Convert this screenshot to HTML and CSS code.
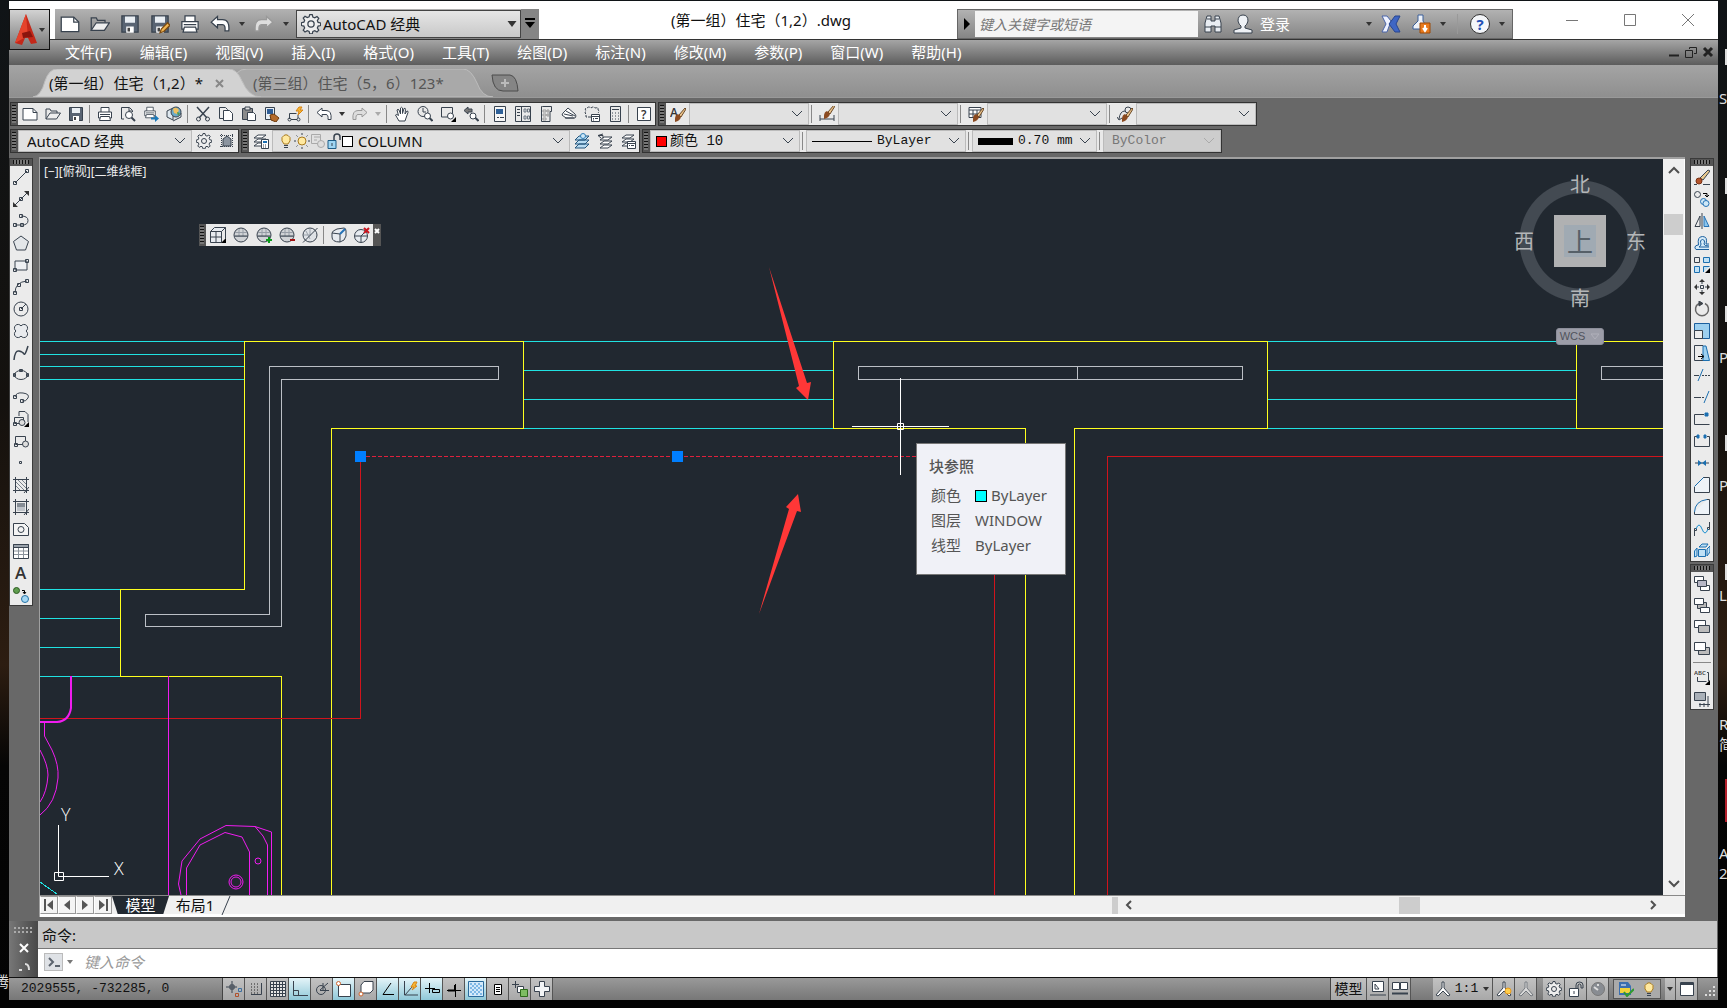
FILE: index.html
```html
<!DOCTYPE html>
<html lang="zh-CN">
<head>
    <meta charset="UTF-8">
    <title>(第一组）住宅（1,2）.dwg</title>
    <link rel="stylesheet" href="styles.css">
</head>
<body>

<!-- 图标库 -->
<svg class="sprite" aria-hidden="true">
    <symbol id="down" viewBox="0 0 8 8"><path d="M1 2h6L4 6z" fill="currentColor" stroke="none"/></symbol>
    <symbol id="chevron" viewBox="0 0 12 12"><path d="M1 3l5 5 5-5"/></symbol>
    <symbol id="new" viewBox="0 0 16 16"><path d="M1 2.500h10l4 4v7.500h-14z" fill="#fff"/><path d="M11 2.500v4h4"/></symbol>
    <symbol id="open" viewBox="0 0 16 16"><path d="M1 13V3h4l1 2h6v2"/><path d="M1 13l4-6h10.500l-4 6z" fill="#eee"/></symbol>
    <symbol id="save" viewBox="0 0 16 16"><path d="M1.500 1.500h13v13h-13z" fill="#596473"/><path d="M4 2h8v5H4z" fill="#e9eef3" stroke="none"/><path d="M5 10h6v5H5z" fill="#fff" stroke="none"/><path d="M6 11h2v3H6z" fill="#444" stroke="none"/></symbol>
    <symbol id="saveas" viewBox="0 0 16 16"><use href="#save"/><path d="M8 15l1-3 5-5 2 2-5 5z" fill="#f0b552" stroke="#7b4a12"/></symbol>
    <symbol id="print" viewBox="0 0 16 16"><path d="M4 6V1.500h8V6M1.500 6h13v6h-13z" fill="#fff"/><path d="M3.500 10.500h9l1 4h-11z" fill="#fff"/><path d="M3 8.500h10"/></symbol>
    <symbol id="preview" viewBox="0 0 16 16"><path d="M4 13H1.500V1.500h8l3 3V6M9 2v3h3" fill="none"/><circle cx="9" cy="9" r="3.500" fill="#fff"/><path d="M11.500 11.500L15 15" stroke-width="2"/></symbol>
    <symbol id="publish" viewBox="0 0 16 16"><use href="#print" width="14" height="13"/><path d="M8 11.500h4V9l4 3.500-4 3.500v-2.500H8z" fill="#1a78b8" stroke="none"/></symbol>
    <symbol id="dwf" viewBox="0 0 16 16"><path d="M1 5l6-3v12l-6-3zM7 15l8-4V7" fill="#dfe8ef"/><circle cx="10" cy="6" r="5" fill="#6aa9c9"/><path d="M7 3q3-3 6 1l-2 4-3-1z" fill="#f0c060" stroke="none"/><path d="M11 6l3 1-2 3z" fill="#4f9a4b" stroke="none"/></symbol>
    <symbol id="cut" viewBox="0 0 16 16"><path d="M2 1l10 11M14 1L4 12" stroke-width="1.500"/><circle cx="3.500" cy="13" r="2"/><circle cx="12.500" cy="13" r="2"/></symbol>
    <symbol id="copy" viewBox="0 0 16 16"><path d="M1.500 1.500h6l2 2v9h-8z" fill="#eee"/><path d="M5.500 4.500h6l3 3v7h-9z" fill="#fff"/></symbol>
    <symbol id="paste" viewBox="0 0 16 16"><path d="M1.500 2.500h10v11h-10z" fill="#8a8a8a"/><path d="M4 1h5v3H4z" fill="#ddd"/><path d="M6.500 6.500h6l2 2v6h-8z" fill="#fff"/></symbol>
    <symbol id="match" viewBox="0 0 16 16"><path d="M1.500 1.500h9v12h-9z" fill="#e6eef5"/><path d="M3 3h6v5H3z" fill="#2f5d96" stroke="none"/><path d="M6 9l4-1 5 4-3 4-5-2z" fill="#b56b2a" stroke="#6d3a0c"/></symbol>
    <symbol id="block" viewBox="0 0 16 16"><path d="M2.500 13V7.500h7M4 13.500h6M11 12V9"/><circle cx="2.500" cy="13.500" r="1.500"/><circle cx="11.500" cy="13.500" r="1.500"/><path d="M12 1l-3 4h3l-1 4 5-5h-3l2-3z" fill="#f7b733" stroke="#d78414"/></symbol>
    <symbol id="undo" viewBox="0 0 16 16"><path d="M6 2L1 6.500 6 11V8.500h4q2.500 0 2 5h3q1-9-5-9H6z" fill="#fff"/></symbol>
    <symbol id="redo" viewBox="0 0 16 16"><path d="M10 2l5 4.500-5 4.500V8.500H6q-2.500 0-2 5H1q-1-9 5-9h4z" fill="#ddd" stroke="#999"/></symbol>
    <symbol id="hand" viewBox="0 0 16 16"><path d="M5 15L1.500 9q1-1.500 3 .5L3 4q1-1.500 2 0l1.500 4L6.500 2q1-1.500 2 0v5.500L10 2.500q1.500-.8 1.500.8L11 8l2-3q1.500 0 1 1.500L12 12l-1 3z" fill="#fff"/></symbol>
    <symbol id="zoomrt" viewBox="0 0 16 16"><circle cx="6" cy="5.500" r="5"/><path d="M6 2v4h3"/><circle cx="10.500" cy="10" r="3" fill="#fff"/><path d="M12.500 12l3 3" stroke-width="2"/></symbol>
    <symbol id="zoomwin" viewBox="0 0 16 16"><path d="M1.500 1.500h11V11h-11z"/><circle cx="10.500" cy="10" r="3" fill="#fff"/><path d="M16 11v5h-5z" fill="#000" stroke="none"/></symbol>
    <symbol id="zoomprev" viewBox="0 0 16 16"><path d="M1 4.500L5 1v2h4v3H5v2z" fill="#777"/><circle cx="10" cy="10" r="3" fill="#fff"/><path d="M12.500 12l3 3" stroke-width="2"/></symbol>
    <symbol id="props" viewBox="0 0 16 16"><path d="M2.500 .5h11v15h-11z" fill="#f6f6f6"/><path d="M4 3h7v5H4z" fill="#2e6098" stroke="none"/><path d="M5 11.500h2M8 11.500h4"/></symbol>
    <symbol id="dcenter" viewBox="0 0 16 16"><path d="M.5 .5h15v15H.5zM6.500 .5v15M2 3.500h3M2 6.500h3M2 9.500h3"/><path d="M9 3h2v3H9zM12.500 3h2v3h-2zM9 10h2v3H9zM12.500 10h2v3h-2z" stroke="#6d7782"/></symbol>
    <symbol id="palette" viewBox="0 0 16 16"><path d="M4.500 .5h9v5h-1.500v10h-8.500v-15z"/><path d="M5 4h3v2H5zM9 4h2v2H9zM5 8h3v2H5zM9 8h2v2H9zM5 12h3v2H5z" stroke="#999"/></symbol>
    <symbol id="sheet" viewBox="0 0 16 16"><path d="M2 7l5-5 7 6q2 2 0 4H5L1 9z" fill="#fff"/><path d="M3 8l9 2M5 5l9 5M4 12h9"/></symbol>
    <symbol id="markup" viewBox="0 0 16 16"><path d="M7 11H2V8q-2-1 0-3Q0 2 3 2q2-2 4 0 2-2 4 0 4-1 3 2 2 1 0 3" stroke-dasharray="3 1"/><path d="M7.500 8.500h8v7h-8zM7.500 10.500h8M9 12.500h1M11 12.500h3M9 14h1" fill="#fff"/></symbol>
    <symbol id="calc" viewBox="0 0 16 16"><path d="M3.500 .5h10v15h-10zM5 3.500h7"/><path d="M5 7h7M5 10h7M5 13h7" stroke-dasharray="1 2"/></symbol>
    <symbol id="help" viewBox="0 0 16 16"><path d="M1.500 1.500h13v13h-13z" fill="#fff"/><text x="5" y="13" class="glyph">?</text></symbol>
    <symbol id="brush" viewBox="0 0 16 16"><path d="M9 9l6-7 1 1-5 8z" fill="#eac28a" stroke="#6b4a28"/><path d="M5 13q0-4 3-5l3 3q-1 4-6 5z" fill="#8b4a20" stroke="none"/></symbol>
    <symbol id="tstyle" viewBox="0 0 16 16"><text x="0" y="11" class="glyph">A</text><use href="#brush"/></symbol>
    <symbol id="dstyle" viewBox="0 0 16 16"><path d="M1 9v6M15 9v6M1 13h14"/><use href="#brush" y="-3"/></symbol>
    <symbol id="tabstyle" viewBox="0 0 16 16"><path d="M1 1.500h12v10H1zM1 4h12M1 8h12M5 4v7M9 4v7" fill="#fff"/><use href="#brush"/></symbol>
    <symbol id="mlstyle" viewBox="0 0 16 16"><circle cx="11" cy="4" r="3"/><path d="M8 5q-5 0-6 8M0 11l2 3 3-2"/><use href="#brush"/></symbol>
    <symbol id="gear" viewBox="0 0 16 16"><path d="M7 .5h2l.5 2 1.500.6 1.800-1.100 1.400 1.400-1.100 1.800.6 1.500 2 .5v2l-2 .5-.6 1.500 1.100 1.800-1.400 1.400-1.800-1.100-1.500.6-.5 2H7l-.5-2-1.500-.6-1.800 1.100-1.400-1.400 1.100-1.800-.6-1.500-2-.5V7l2-.5.6-1.500L1.800 3.200l1.400-1.400L5 2.900l1.500-.6z" fill="#eee"/><circle cx="8" cy="8" r="2.500"/></symbol>
    <symbol id="wsave" viewBox="0 0 16 16"><path d="M1 2.500h14M1 13.500h14M2.500 1v14M13.500 1v14" stroke-dasharray="1 1"/><path d="M4 13V6l4-3 4 3v7z" fill="#8b949f"/></symbol>
    <symbol id="layers" viewBox="0 0 16 16"><path d="M5 2h8l-4 3H1zM5 6h8l-4 3H1zM5 10h8l-4 3H1z" fill="#fff"/></symbol>
    <symbol id="layerprops" viewBox="0 0 16 16"><use href="#layers"/><path d="M8.500 6.500h7v9h-7z" fill="#fff"/><path d="M10 8h4v2h-4z" fill="#1b6db0" stroke="none"/><path d="M10 12h4M10 14h4" stroke-dasharray="1 1"/></symbol>
    <symbol id="layercur" viewBox="0 0 16 16"><path d="M5 3h10l-4 4H1zM5 7h10l-4 4H1zM5 11h10l-4 4H1z" fill="#b9dcf2" stroke="#23557c"/><circle cx="9" cy="3" r="2.500" fill="#cfe8f7" stroke="#2f7db5"/></symbol>
    <symbol id="layerprev" viewBox="0 0 16 16"><use href="#layers" x="2" y="2"/><path d="M6 1L1 2.500 4 5M1 2.500h5v3"/></symbol>
    <symbol id="layerstate" viewBox="0 0 16 16"><use href="#layers" x="1"/><path d="M7.500 8.500h8v7h-8zM8 10.500h7M9 12.500h1M11 12.500h3" fill="#fff"/></symbol>
    <symbol id="bulb" viewBox="0 0 16 16"><path d="M6 11Q3 8 4 4.500q4-5.500 8 0Q13 8 10 11z" fill="#ffe9a0" stroke="#a97b20"/><path d="M6 12.500h4M6 14.500h4"/></symbol>
    <symbol id="sun" viewBox="0 0 16 16"><circle cx="8" cy="8" r="4" fill="#ffe9a0" stroke="#a97b20"/><path d="M8 0v2M8 14v2M0 8h2M14 8h2M2.500 2.500l1 1M12.500 12.500l1 1M13.500 2.500l-1 1M2.500 13.500l1-1"/></symbol>
    <symbol id="freeze" viewBox="0 0 16 16"><path d="M1.500 1.500h9v9h-9zM4 4h6M4 7h3" stroke="#aaa"/><circle cx="11" cy="11" r="3.500" fill="#ddd" stroke="#aaa"/></symbol>
    <symbol id="unlock" viewBox="0 0 16 16"><path d="M2 7.500h8v8H2z" fill="#9fd6f3" stroke="#1f5d86"/><path d="M8 7V4q0-3 3-3t3 3v3" stroke-width="1.500"/><path d="M6 10v3"/></symbol>
    <symbol id="lock-open" viewBox="0 0 16 16"><path d="M1.500 7.500h9v8h-9z" fill="#fff"/><path d="M8 7V4q0-3 3.500-3T15 4v3h-2V4q-1.500-2-3 0v3M6 10v3"/></symbol>
    <symbol id="line" viewBox="0 0 16 16"><path d="M2 14L14 2M.5 12.500h3v3h-3zM12.500 .5h3v3h-3z"/></symbol>
    <symbol id="xline" viewBox="0 0 16 16"><path d="M2 14L14 2M6.500 6.500h3v3h-3z"/><path d="M0 11v5h5zM11 0h5v5z" fill="#333" stroke="none"/></symbol>
    <symbol id="pline" viewBox="0 0 16 16"><path d="M2 12h7q6 0 6-4.500T8 3M.5 10.500h3v3h-3zM7.500 10.500h3v3h-3zM6.500 1.500h3v3h-3z"/></symbol>
    <symbol id="polygon" viewBox="0 0 16 16"><path d="M8 1l7.500 5.500-3 8.500h-9L.5 6.500z" fill="#e3e6e9"/></symbol>
    <symbol id="rect" viewBox="0 0 16 16"><path d="M2 4h12v9H2z" fill="#eef0f3"/><path d="M.5 11.500h3v3h-3zM12.500 2.500h3v3h-3z"/></symbol>
    <symbol id="arc" viewBox="0 0 16 16"><path d="M2 14Q2 3 14 2M.5 12.500h3v3h-3zM12.500 .5h3v3h-3zM4.500 4.500h3v3h-3z"/></symbol>
    <symbol id="circle" viewBox="0 0 16 16"><circle cx="8" cy="8" r="7"/><path d="M8 8l5-5M6.500 6.500h3v3h-3z"/></symbol>
    <symbol id="cloud" viewBox="0 0 16 16"><path d="M8 3a3.600 3.600 0 1 1 5 5 3.600 3.600 0 1 1-5 5 3.600 3.600 0 1 1-5-5 3.600 3.600 0 1 1 5-5z" fill="#e9ebee"/></symbol>
    <symbol id="spline" viewBox="0 0 16 16"><path d="M1 15Q2 5 6 6t5 3 4-8" stroke-width="1.500"/></symbol>
    <symbol id="ellipse" viewBox="0 0 16 16"><ellipse cx="8" cy="8" rx="6.500" ry="4.500"/><path d="M.5 6.500h2v3h-2zM13.500 6.500h2v3h-2zM6.500 2.500h3v2h-3z"/></symbol>
    <symbol id="ellarc" viewBox="0 0 16 16"><path d="M2 8q1-5 8-4t5 5-6 3M.5 6.500h3v3h-3zM7.500 10.500h3v3h-3z"/></symbol>
    <symbol id="insert" viewBox="0 0 16 16"><path d="M6 5V.5h6l3 3V11M1.500 6.500h9v6h-9z"/><circle cx="9" cy="11.500" r="3" fill="#ddd"/><path d="M.5 11.500h3v3h-3z"/><path d="M16 11v5h-5z" fill="#000" stroke="none"/></symbol>
    <symbol id="mkblock" viewBox="0 0 16 16"><path d="M2.500 3.500h10v8h-10z"/><circle cx="12.500" cy="11" r="3" fill="#ddd"/><path d="M1.500 10.500h3v3h-3z"/></symbol>
    <symbol id="point" viewBox="0 0 16 16"><path d="M6.500 6.500h2v2h-2z"/></symbol>
    <symbol id="hatch" viewBox="0 0 16 16"><path d="M3 9l4 4M3 5l8 8M5 3l8 8M9 3l4 4" stroke="#7b838c"/><path d="M0 2.500h16M0 13.500h16M2.500 0v16M13.500 0v16M11 16l5-6"/></symbol>
    <symbol id="gradient" viewBox="0 0 16 16"><path d="M4 4h8v4H4z" fill="#858c94" stroke="none"/><path d="M4 8h8v4H4z" fill="#bfc4ca" stroke="none"/><path d="M0 2.500h16M0 13.500h16M2.500 0v16M13.500 0v16M11 16l5-6"/></symbol>
    <symbol id="region" viewBox="0 0 16 16"><path d="M.5 2.500h11l4 4v8H.5z" fill="#f4f4f4"/><circle cx="8" cy="8.500" r="3"/></symbol>
    <symbol id="table" viewBox="0 0 16 16"><path d="M.5 1.500h15v14H.5z" fill="#fff"/><path d="M1 8h14M1 11.500h14M5.500 4v11M10.500 4v11" stroke="#8a929b"/><path d="M.5 1.500h15v3H.5z" fill="#9aa2ab"/></symbol>
    <symbol id="mtext" viewBox="0 0 16 16"><text x="2" y="14" class="glyph big">A</text></symbol>
    <symbol id="addsel" viewBox="0 0 16 16"><circle cx="3.500" cy="3.500" r="3" fill="#5f9d4e" stroke="#2d5c22"/><circle cx="12" cy="12" r="3.500" fill="#a5d8f5" stroke="#2672a5"/><path d="M9 3.500h2.500V6M10 5l1.500 2L13 5" stroke="#000"/></symbol>
    <symbol id="erase" viewBox="0 0 16 16"><path d="M0 15.500h3M9 15.500h7"/><path d="M6 9l8-8 2 1-7 9z" fill="#e8c98f"/><circle cx="5" cy="12" r="3" fill="#b5532a" stroke="#7a3214"/></symbol>
    <symbol id="copyobj" viewBox="0 0 16 16"><circle cx="3.500" cy="3.500" r="3"/><circle cx="9.500" cy="10.500" r="3" fill="#cfe8f7" stroke="#2672b5"/><circle cx="12" cy="12.500" r="3" fill="#cfe8f7" stroke="#2672b5"/><path d="M9 2.500h4V5M11 4l2 2 2-2" stroke="#000"/></symbol>
    <symbol id="mirror" viewBox="0 0 16 16"><path d="M6 3v10.500H1zM8 0v16"/><path d="M10 3v10.500h5z" fill="#8cc6ee" stroke="#2672b5"/></symbol>
    <symbol id="offset" viewBox="0 0 16 16"><path d="M15 14.500H2q-2-1.500-.5-3.500Q3 10 4.500 10 3 1.500 8.500 1.500T12 9h3" fill="#d5eaf8" stroke="#1b5f9e"/><path d="M15 12H5q2-1 2-3-1.500-4 1.500-4.500 3 .5 1.500 4.500 0 2 5 2" stroke="#1b5f9e"/></symbol>
    <symbol id="array" viewBox="0 0 16 16"><path d="M.5 .5h5v5h-5z"/><path d="M9.500 .5h6v5h-6zM.5 9.500h5v6h-5zM9.500 15V9.500h6" fill="#bfe0f5" stroke="#1b6fb0"/><path d="M16 11v5h-5z" fill="#000" stroke="none"/></symbol>
    <symbol id="move" viewBox="0 0 16 16"><path d="M6.500 6.500h3v3h-3zM8 2v3M8 11v3M2 8h3M11 8h3"/><path d="M8 0l3 3H5zM8 16l3-3H5zM0 8l3-3v6zM16 8l-3-3v6z" fill="#333" stroke="none"/></symbol>
    <symbol id="rotate" viewBox="0 0 16 16"><path d="M5 2.500A6.500 6.500 0 1 0 11 2.500" stroke="#666" stroke-width="1.500"/><path d="M5 0l4 2.500L5 5z" fill="#444"/></symbol>
    <symbol id="scale" viewBox="0 0 16 16"><path d="M.5 .5h15v15H.5z" fill="#9dd0f0" stroke="#1b5f9e"/><path d="M.5 7.500h8v8h-8z" fill="#eee"/></symbol>
    <symbol id="stretch" viewBox="0 0 16 16"><path d="M9 .5H.5v15H9"/><path d="M9 1h3l3.500 14.500H9z" fill="#9dd0f0" stroke="#1b6fb0"/><path d="M4 11.500h5M7 9l3 2.500L7 14" stroke="#000"/></symbol>
    <symbol id="trim" viewBox="0 0 16 16"><path d="M0 8.500h5" /><path d="M4 14L9 2" stroke="#1b6fb0"/><path d="M8 8.500h8" stroke-dasharray="2 1"/></symbol>
    <symbol id="extend" viewBox="0 0 16 16"><path d="M0 8.500h5"/><path d="M5 8.500h6" stroke-dasharray="2 1"/><path d="M10 14l5-12" stroke="#1b6fb0"/></symbol>
    <symbol id="breakpt" viewBox="0 0 16 16"><path d="M10 3.500H.5v10h15"/><path d="M11 2h3v3h-3z" fill="#1b6fb0" stroke="#1b6fb0"/></symbol>
    <symbol id="break" viewBox="0 0 16 16"><path d="M3 3.500H.5v10h15v-10H13"/><path d="M3 2h2v3H3zM10 2h2v3h-2z" fill="#1b6fb0" stroke="#1b6fb0"/></symbol>
    <symbol id="join" viewBox="0 0 16 16"><path d="M1 8h14"/><path d="M4 5l4 3-4 3zM12 5L8 8l4 3z" fill="#1b6fb0" stroke="none"/></symbol>
    <symbol id="chamfer" viewBox="0 0 16 16"><path d="M.5 10v5.500h15V.5H9" fill="#eef3f8"/><path d="M.5 9.500l9-9" stroke="#1b6fb0"/></symbol>
    <symbol id="fillet" viewBox="0 0 16 16"><path d="M.5 13v2.500h15V.5H13" fill="#eef3f8"/><path d="M.5 13Q1 2 13 .5" stroke="#1b6fb0"/></symbol>
    <symbol id="blend" viewBox="0 0 16 16"><path d="M.5 15V9M15.500 1v6M.5 7.500h2v2h-2zM13.500 6.500h2v2h-2z"/><path d="M2 8q3-8 6 0t6 0" stroke="#1b8fd0"/></symbol>
    <symbol id="explode" viewBox="0 0 16 16"><path d="M4.500 6.500h7v7h-7zM5 4l3-3h6l-2 3zM13 6l3-3v6l-3 4zM3 5L.5 8v6L3 13z" fill="#bfe0f5" stroke="#1b6fb0"/></symbol>
    <symbol id="front" viewBox="0 0 16 16"><path d="M.5 1.500h9v6h-9zM6.500 10.500h9v5h-9z" fill="#fff"/><path d="M3.500 5.500h9v6h-9z" fill="#b7b7c6"/></symbol>
    <symbol id="back" viewBox="0 0 16 16"><path d="M3.500 5.500h9v6h-9z" fill="#b7b7b7"/><path d="M.5 1.500h9v6h-9zM6.500 10.500h9v5h-9z" fill="#fff"/></symbol>
    <symbol id="above" viewBox="0 0 16 16"><path d="M.5 1.500h11v7H.5z" fill="#fff"/><path d="M4.500 6.500h11v7h-11z" fill="#bbb"/></symbol>
    <symbol id="under" viewBox="0 0 16 16"><path d="M4.500 6.500h11v7h-11z" fill="#bbb"/><path d="M.5 1.500h11v8H.5z" fill="#fff"/></symbol>
    <symbol id="textfront" viewBox="0 0 16 16"><text x="0" y="6" class="glyph tiny">ABC</text><path d="M3.500 8v4.500h9M13 3.500h1.500V12"/><path d="M16 11v5h-5z" fill="#000" stroke="none"/></symbol>
    <symbol id="hatchback" viewBox="0 0 16 16"><path d="M.5 1.500h11v8H.5z" fill="#a9b0b8"/><path d="M5 13.500h11M14 5v11M6 12v4M10 12v4" /></symbol>
    <symbol id="meshbox" viewBox="0 0 16 16"><path d="M.5 4.500h11v11H.5zM.5 4.500l4-4h11l-4 4M15.500 .5v11M6 4.500v11M.5 10h11" fill="#e7ebf0"/><path d="M16 11v5h-5z" fill="#000" stroke="none"/></symbol>
    <symbol id="ball" viewBox="0 0 16 16"><path d="M2 5.500h12M2 9.500h12M6 1v8M10 1v8" stroke="#8a929b"/><circle cx="8" cy="8" r="7" fill="#aab2ba" fill-opacity=".4"/><path d="M1.500 9h13"/></symbol>
    <symbol id="ballplus" viewBox="0 0 16 16"><use href="#ball"/><path d="M13 10v6M10 13h6" stroke="#0a9a1a" stroke-width="2"/></symbol>
    <symbol id="ballminus" viewBox="0 0 16 16"><use href="#ball"/><path d="M11 13h5" stroke="#a01010" stroke-width="2"/></symbol>
    <symbol id="ballcut" viewBox="0 0 16 16"><circle cx="8" cy="8" r="7" fill="#dfe2e6"/><path d="M4 4l4 8M8 2v6M2 8h7" stroke="#9aa2ab"/><path d="M1 15.500L15.500 1"/></symbol>
    <symbol id="meshcrease" viewBox="0 0 16 16"><path d="M1 6q0-2 5-4l7-1q2 0 2 3v5q-1 5-6 6-8 0-8-5zM1 6l8 1v8" fill="#e7ebf0"/><path d="M9 7l5-5" stroke="#2672b5" stroke-width="2"/></symbol>
    <symbol id="meshnone" viewBox="0 0 16 16"><circle cx="7" cy="9" r="6.500" fill="#e7ebf0"/><path d="M1 9h12M7 9v6M7 9l4-4"/><path d="M10 1l5 5M15 1l-5 5" stroke="#c8141e" stroke-width="2"/></symbol>
    <!-- 状态栏 -->
    <symbol id="s-infer" viewBox="0 0 16 16"><path d="M0 6h11M6 0v12M4 4h4v4H4z"/><path d="M12.500 7.500h3v3h-3z" stroke="#3f6f9d"/><path d="M9.500 12.500h3v3h-3z" stroke="#b0502c"/></symbol>
    <symbol id="s-snap" viewBox="0 0 16 16"><path d="M3 3h8M3 6h8M3 9h8M3 12h8" stroke="#222" stroke-dasharray="1 2"/><path d="M13.500 2v11.500H3"/></symbol>
    <symbol id="s-grid" viewBox="0 0 16 16"><path d="M.5 .5h15v15H.5z" fill="#e6e6e6"/><path d="M3.500 0v16M6.500 0v16M9.500 0v16M12.500 0v16M0 3.500h16M0 6.500h16M0 9.500h16M0 12.500h16"/></symbol>
    <symbol id="s-ortho" viewBox="0 0 16 16"><path d="M1.500 0v14.500H16M1.500 9.500h5v5"/></symbol>
    <symbol id="s-polar" viewBox="0 0 16 16"><circle cx="7" cy="9" r="4.500"/><path d="M6 9.500h9M6 9l8-7M9 2v8" /></symbol>
    <symbol id="s-osnap" viewBox="0 0 16 16"><path d="M2.500 3.500h12v12h-12z" fill="#fff"/><circle cx="2.500" cy="2.500" r="2" fill="#fff" stroke="#d0642c"/></symbol>
    <symbol id="s-osnap3" viewBox="0 0 16 16"><path d="M3 4l3-3.500h9V9l-3 3H3z" fill="#fff"/><circle cx="3" cy="13" r="2" fill="#fff" stroke="#d0642c"/></symbol>
    <symbol id="s-track" viewBox="0 0 16 16"><path d="M11 2L3 13.500h11" stroke="#000"/></symbol>
    <symbol id="s-ducs" viewBox="0 0 16 16"><path d="M2.500 0v14H16M3 14l7-8"/><path d="M12 1L9 6h3l-2 3 5-4h-2l2-4z" fill="#f7b733" stroke="#d78414"/></symbol>
    <symbol id="s-dyn" viewBox="0 0 16 16"><path d="M1 7.500h10M5.500 2v10M8.500 8.500h7v3h-7z" stroke="#000"/></symbol>
    <symbol id="s-lwt" viewBox="0 0 16 16"><path d="M1 9.500h14M9.500 3v13" stroke="#000"/><path d="M2 9.500h7V4" stroke="#000" stroke-width="2"/></symbol>
    <symbol id="s-tpy" viewBox="0 0 16 16"><path d="M.5 .5h15v15H.5z" fill="#d4eafa" stroke="#2a6b9d"/><path d="M2 3h12M2 7h12M2 11h12" stroke="#7db8e6" stroke-width="2" stroke-dasharray="2 2"/><path d="M4 5h10M4 9h10M4 13h10" stroke="#7db8e6" stroke-width="2" stroke-dasharray="2 2"/></symbol>
    <symbol id="s-qp" viewBox="0 0 16 16"><path d="M4.500 3.500h7v10h-7zM6 6.500h4M6 8.500h4M6 10.500h4" fill="#fff" stroke="#000"/></symbol>
    <symbol id="s-sc" viewBox="0 0 16 16"><path d="M0 3.500h7M3.500 0v7"/><path d="M5.500 5.500h6v6h-6z" fill="#fff"/><path d="M8.500 8.500h7v7h-7z" fill="#7dbd62" stroke="#2d6a1b"/></symbol>
    <symbol id="s-am" viewBox="0 0 16 16"><path d="M5.500 .5h5v5h5v5h-5v5h-5v-5h-5v-5h5z" fill="#f2f4f6"/></symbol>
    <symbol id="s-layout" viewBox="0 0 16 16"><path d="M2.500 .5h11v10h-11z" fill="#fff"/><path d="M5 3l4 5H5zM0 14h16"/></symbol>
    <symbol id="s-quick" viewBox="0 0 16 16"><path d="M.5 1.500h7v7h-7zM8.500 1.500h7v7h-7z" fill="#fff"/><path d="M0 12.500h16" stroke-width="2"/></symbol>
    <symbol id="s-anno" viewBox="0 0 16 16"><path d="M7 1h2v6l6 7-2 1-5-5-5 5-2-1 6-7z" fill="#fff"/></symbol>
    <symbol id="s-annoauto" viewBox="0 0 16 16"><use href="#s-anno"/><circle cx="12" cy="10" r="3" fill="#ffcf4a" stroke="#e89a1c"/></symbol>
    <symbol id="s-iso" viewBox="0 0 16 16"><circle cx="8" cy="8" r="6.500" fill="#888c92" stroke="#777"/><path d="M4 6l4 3M8 3v2" stroke="#ddd" stroke-width="2"/></symbol>
    <symbol id="s-perf" viewBox="0 0 16 16"><path d="M1 1h9l3 4v9H1z" fill="#3a6fb0" stroke="none"/><path d="M2 7h10v5H2z" fill="#f2d33c" stroke="none"/><path d="M3 4h5" stroke="#fff"/><path d="M6 11l3 4 7-7" stroke="#2f9a2f" stroke-width="2"/></symbol>
    <symbol id="s-clean" viewBox="0 0 16 16"><path d="M1.500 1.500h13v13h-13z" fill="#fff"/><path d="M2 3h12" stroke-width="2"/></symbol>
</svg>

<div class="desktop" aria-hidden="true">
    <span class="desk-text d1">Sk</span>
    <span class="desk-text d2">Pr</span>
    <span class="desk-text d3">Ph</span>
    <span class="desk-text d4">Lu</span>
    <span class="desk-text d5">Re<br>简</span>
    <span class="desk-text d6">A<br>20</span>
    <span class="desk-text left">腾</span>
    <i class="desk-icon k1"></i><i class="desk-icon k2"></i><i class="desk-icon k3"></i><i class="desk-icon k4"></i><i class="desk-icon k5"></i><i class="desk-icon k6"></i>
</div>

<div class="app">
    <!-- 标题栏 -->
    <header class="titlebar">
        <button class="logo" aria-label="应用程序菜单">
            <svg width="24" height="34" viewBox="0 0 24 34"><path d="M12 1L1 30l7 2 3-7h3l3 6 6-1z" fill="#c3281a"/><path d="M12 1l2 24h-4L1 30z" fill="#e5432c"/><path d="M8 20l8-2 3 6-10 1z" fill="#8b150d"/></svg>
            <svg class="tiny-arrow"><use href="#down"/></svg>
        </button>
        <div class="quick">
            <button class="q"><svg class="qi"><use href="#new"/></svg></button>
            <button class="q"><svg class="qi"><use href="#open"/></svg></button>
            <button class="q"><svg class="qi"><use href="#save"/></svg></button>
            <button class="q"><svg class="qi"><use href="#saveas"/></svg></button>
            <button class="q"><svg class="qi"><use href="#print"/></svg></button>
            <button class="q"><svg class="qi"><use href="#undo"/></svg></button>
            <button class="q-arrow"><svg class="tiny-arrow"><use href="#down"/></svg></button>
            <button class="q"><svg class="qi"><use href="#redo"/></svg></button>
            <button class="q-arrow"><svg class="tiny-arrow"><use href="#down"/></svg></button>
            <div class="workspace">
                <svg class="qi"><use href="#gear"/></svg>
                <select aria-label="工作空间"><option>AutoCAD 经典</option></select>
                <svg class="arrow"><use href="#down"/></svg>
            </div>
            <button class="q-more"><svg width="12" height="14"><path d="M1 2h10" stroke="#000" stroke-width="2"/><path d="M1 5h10l-5 6z" fill="#000" stroke="none"/></svg></button>
        </div>
        <h1 class="doc-title">(第一组）住宅（1,2）.dwg</h1>
        <div class="info">
            <button class="info-toggle"><svg width="8" height="12" viewBox="0 0 8 12"><path d="M1 0l6 6-6 6z" fill="#000"/></svg></button>
            <input class="search" type="text" placeholder="键入关键字或短语" aria-label="搜索">
            <button class="q"><svg class="qi" viewBox="0 0 20 20"><path d="M2 9l2-7h4v5h4V2h4l2 7v9h-6v-6H8v6H2z" fill="#e9edf2"/><path d="M2 13h6M12 13h6M4 5h4M12 5h4"/></svg></button>
            <button class="q"><svg class="qi" viewBox="0 0 20 20"><path d="M10 1q5 0 5 6-1 4-3 5v2l7 2v3H1v-3l7-2v-2q-2-1-3-5 0-6 5-6z" fill="#eef1f5"/></svg></button>
            <button class="login">登录</button>
            <button class="q-arrow"><svg class="tiny-arrow"><use href="#down"/></svg></button>
            <button class="q"><svg class="qi" viewBox="0 0 20 20"><path d="M1 2h5l4 5-4 11H1l4-8z" fill="#eef2ff" stroke="#4a64a8"/><path d="M19 2h-5L8 10l6 8h5l-4-8z" fill="#3f66c4" stroke="#28458e"/></svg></button>
            <button class="q"><svg class="qi" viewBox="0 0 20 20"><path d="M7 1h5v6l3 5-2 3H2v-3l5-5z" fill="#eef2f8" stroke="#3b5f99"/><path d="M9 9h10v10H9z" fill="#e97a1c" stroke="#9c4a08"/><path d="M14 11v5M12 14l2 3 2-3" stroke="#fff" stroke-width="2"/></svg></button>
            <button class="q-arrow"><svg class="tiny-arrow"><use href="#down"/></svg></button>
            <span class="info-sep"></span>
            <button class="q"><span class="help-ball">?</span></button>
            <button class="q-arrow"><svg class="tiny-arrow"><use href="#down"/></svg></button>
        </div>
        <div class="win-buttons">
            <button aria-label="最小化"><svg width="14" height="14"><path d="M1 7.500h12"/></svg></button>
            <button aria-label="最大化"><svg width="14" height="14"><path d="M1.500 1.500h11v11h-11z"/></svg></button>
            <button aria-label="关闭"><svg width="14" height="14"><path d="M1 1l12 12M13 1L1 13"/></svg></button>
        </div>
    </header>

    <nav class="menubar">
        <a href="#">文件(F)</a><a href="#">编辑(E)</a><a href="#">视图(V)</a><a href="#">插入(I)</a><a href="#">格式(O)</a><a href="#">工具(T)</a><a href="#">绘图(D)</a><a href="#">标注(N)</a><a href="#">修改(M)</a><a href="#">参数(P)</a><a href="#">窗口(W)</a><a href="#">帮助(H)</a>
        <div class="mdi">
            <button aria-label="最小化"><svg width="12" height="12"><path d="M1 9.500h10" stroke-width="2"/></svg></button>
            <button aria-label="还原"><svg width="12" height="12"><path d="M4.500 3V1.500h7v6H9M.5 4.500h7v7h-7z"/></svg></button>
            <button aria-label="关闭"><svg width="12" height="12"><path d="M2 2l8 8M10 2l-8 8" stroke-width="3"/></svg></button>
        </div>
    </nav>

    <div class="doc-tabs">
        <div class="doc-tab active">
            <svg class="tab-shape" viewBox="0 0 228 28" preserveAspectRatio="none"><path d="M0 28Q8 27 12 12 16 0 24 0H196Q204 0 209 12 216 28 228 28z" fill="#d2d2d2"/></svg>
            <a href="#">(第一组）住宅（1,2）*</a>
            <button class="tab-close" aria-label="关闭"><svg width="9" height="9"><path d="M1 1l7 7M8 1L1 8" stroke-width="2"/></svg></button>
        </div>
        <div class="doc-tab">
            <svg class="tab-shape" viewBox="0 0 256 28" preserveAspectRatio="none"><path d="M0 4Q3 0 10 0H226Q234 0 240 14 245 28 256 28H16Q10 26 6 14z" fill="#a9a9a9"/></svg>
            <a href="#">(第三组）住宅（5，6）123*</a>
        </div>
        <button class="tab-new" aria-label="新建"><svg width="28" height="18"><path d="M1 1h18q7 1 8 16H12Q2 17 1 1z" fill="#858585" stroke="#4c4c4c"/><path d="M14 5v8M10 9h8" stroke="#bbb" stroke-width="2"/></svg></button>
    </div>

    <!-- 工具栏 -->
    <div class="bars">
        <div class="bar-row">
            <div class="bar">
                <i class="grip"></i>
                <button class="t"><svg class="ic"><use href="#new"/></svg></button>
                <button class="t"><svg class="ic"><use href="#open"/></svg></button>
                <button class="t"><svg class="ic"><use href="#save"/></svg></button>
                <i class="sep"></i>
                <button class="t"><svg class="ic"><use href="#print"/></svg></button>
                <button class="t"><svg class="ic"><use href="#preview"/></svg></button>
                <button class="t"><svg class="ic"><use href="#publish"/></svg></button>
                <button class="t"><svg class="ic"><use href="#dwf"/></svg></button>
                <i class="sep"></i>
                <button class="t"><svg class="ic"><use href="#cut"/></svg></button>
                <button class="t"><svg class="ic"><use href="#copy"/></svg></button>
                <button class="t"><svg class="ic"><use href="#paste"/></svg></button>
                <button class="t"><svg class="ic"><use href="#match"/></svg></button>
                <button class="t"><svg class="ic"><use href="#block"/></svg></button>
                <i class="sep"></i>
                <button class="t"><svg class="ic"><use href="#undo"/></svg></button>
                <button class="t-arrow"><svg class="tiny-arrow"><use href="#down"/></svg></button>
                <button class="t"><svg class="ic"><use href="#redo"/></svg></button>
                <button class="t-arrow off"><svg class="tiny-arrow"><use href="#down"/></svg></button>
                <i class="sep"></i>
                <button class="t"><svg class="ic"><use href="#hand"/></svg></button>
                <button class="t"><svg class="ic"><use href="#zoomrt"/></svg></button>
                <button class="t"><svg class="ic"><use href="#zoomwin"/></svg></button>
                <button class="t"><svg class="ic"><use href="#zoomprev"/></svg></button>
                <i class="sep"></i>
                <button class="t"><svg class="ic"><use href="#props"/></svg></button>
                <button class="t"><svg class="ic"><use href="#dcenter"/></svg></button>
                <button class="t"><svg class="ic"><use href="#palette"/></svg></button>
                <button class="t"><svg class="ic"><use href="#sheet"/></svg></button>
                <button class="t"><svg class="ic"><use href="#markup"/></svg></button>
                <button class="t"><svg class="ic"><use href="#calc"/></svg></button>
                <i class="sep"></i>
                <button class="t"><svg class="ic"><use href="#help"/></svg></button>
            </div>
            <div class="bar">
                <i class="grip"></i>
                <button class="t"><svg class="ic"><use href="#tstyle"/></svg></button>
                <div class="combo w-style"><select aria-label="文字样式"><option></option></select><svg class="chev"><use href="#chevron"/></svg></div>
                <i class="sep"></i>
                <button class="t"><svg class="ic"><use href="#dstyle"/></svg></button>
                <div class="combo w-style"><select aria-label="标注样式"><option></option></select><svg class="chev"><use href="#chevron"/></svg></div>
                <i class="sep"></i>
                <button class="t"><svg class="ic"><use href="#tabstyle"/></svg></button>
                <div class="combo w-style"><select aria-label="表格样式"><option></option></select><svg class="chev"><use href="#chevron"/></svg></div>
                <i class="sep"></i>
                <button class="t"><svg class="ic"><use href="#mlstyle"/></svg></button>
                <div class="combo w-style"><select aria-label="多重引线样式"><option></option></select><svg class="chev"><use href="#chevron"/></svg></div>
            </div>
        </div>
        <div class="bar-row">
            <div class="bar">
                <i class="grip"></i>
                <div class="combo w-space"><select aria-label="工作空间"><option>AutoCAD 经典</option></select><svg class="chev"><use href="#chevron"/></svg></div>
                <button class="t"><svg class="ic"><use href="#gear"/></svg></button>
                <button class="t"><svg class="ic"><use href="#wsave"/></svg></button>
            </div>
            <div class="bar">
                <i class="grip"></i>
                <button class="t"><svg class="ic"><use href="#layerprops"/></svg></button>
                <div class="combo w-layer">
                    <svg class="ic"><use href="#bulb"/></svg><svg class="ic"><use href="#sun"/></svg><svg class="ic"><use href="#freeze"/></svg><svg class="ic"><use href="#unlock"/></svg><i class="swatch white"></i>
                    <select aria-label="图层"><option>COLUMN</option></select><svg class="chev"><use href="#chevron"/></svg>
                </div>
                <button class="t"><svg class="ic"><use href="#layercur"/></svg></button>
                <button class="t"><svg class="ic"><use href="#layerprev"/></svg></button>
                <button class="t"><svg class="ic"><use href="#layerstate"/></svg></button>
            </div>
            <div class="bar mono">
                <i class="grip"></i>
                <div class="combo w-color"><i class="swatch red-fill"></i><select aria-label="颜色"><option>颜色 10</option></select><svg class="chev"><use href="#chevron"/></svg></div>
                <i class="sep"></i>
                <div class="combo w-ltype"><i class="ltype"></i><select aria-label="线型"><option>ByLayer</option></select><svg class="chev"><use href="#chevron"/></svg></div>
                <i class="sep"></i>
                <div class="combo w-weight"><i class="weight"></i><select aria-label="线宽"><option>0.70 mm</option></select><svg class="chev"><use href="#chevron"/></svg></div>
                <i class="sep"></i>
                <div class="combo w-plot off"><select aria-label="打印样式" disabled><option>ByColor</option></select><svg class="chev"><use href="#chevron"/></svg></div>
            </div>
        </div>
    </div>

    <main class="work">
        <div class="dock">
            <div class="tools">
                <i class="grip-h"></i>
                <button class="v"><svg class="ic"><use href="#line"/></svg></button>
                <button class="v"><svg class="ic"><use href="#xline"/></svg></button>
                <button class="v"><svg class="ic"><use href="#pline"/></svg></button>
                <button class="v"><svg class="ic"><use href="#polygon"/></svg></button>
                <button class="v"><svg class="ic"><use href="#rect"/></svg></button>
                <button class="v"><svg class="ic"><use href="#arc"/></svg></button>
                <button class="v"><svg class="ic"><use href="#circle"/></svg></button>
                <button class="v"><svg class="ic"><use href="#cloud"/></svg></button>
                <button class="v"><svg class="ic"><use href="#spline"/></svg></button>
                <button class="v"><svg class="ic"><use href="#ellipse"/></svg></button>
                <button class="v"><svg class="ic"><use href="#ellarc"/></svg></button>
                <button class="v"><svg class="ic"><use href="#insert"/></svg></button>
                <button class="v"><svg class="ic"><use href="#mkblock"/></svg></button>
                <button class="v"><svg class="ic"><use href="#point"/></svg></button>
                <button class="v"><svg class="ic"><use href="#hatch"/></svg></button>
                <button class="v"><svg class="ic"><use href="#gradient"/></svg></button>
                <button class="v"><svg class="ic"><use href="#region"/></svg></button>
                <button class="v"><svg class="ic"><use href="#table"/></svg></button>
                <button class="v"><svg class="ic"><use href="#mtext"/></svg></button>
                <button class="v"><svg class="ic"><use href="#addsel"/></svg></button>
            </div>
        </div>

        <section class="frame">
            <div class="canvas">
                <svg class="plan" width="100%" height="100%">
                    <g transform="translate(-40 -159)" shape-rendering="crispEdges">
                        <!-- 窗 -->
                        <path class="cyan" d="M40 341.500H244M40 354.500H244M40 366.500H244M40 379.500H244M523 341.500H833M523 370.500H833M523 399.500H833M523 428.500H833M1267 341.500H1576M1267 370.500H1576M1267 399.500H1576M1267 428.500H1576M40 589.500H120M40 618.500H120M40 647.500H120M40 676.500H120M40 882L57 894"/>
                        <!-- 墙柱 -->
                        <path class="yellow" d="M281.500 895V676.500H120.500V589.500H244.500V341.500H523.500V428.500H331.500V895M1025.500 895V428.500H833.500V341.500H1267.500V428.500H1074.500V895M1700 341.500H1576.500V428.500H1700"/>
                        <path class="grey" d="M269.500 366.500H498.500V379.500H281.500V626.500H145.500V614.500H269.500zM858.500 366.500H1242.500V379.500H858.500zM1077.500 366.500V379.500M1700 366.500H1601.500V379.500H1700"/>
                        <path class="red" d="M360.500 456V718.500H40M994.500 456V895M1107.500 895V456.500H1700"/>
                        <path class="red dash" d="M360 456.500H994"/>
                    </g>
                    <!-- 洁具 -->
                    <g transform="translate(-40 -159)" class="magenta">
                        <path d="M168.500 676V895"/>
                        <path d="M71 676V708Q69 721 57 722H40" stroke-width="2"/>
                        <path d="M44.500 722V736L52 750Q59 765 58 778 56 803 40 815M40 750Q48 765 48 775 47 792 40 802"/>
                        <path d="M181 895L178.500 884 182 861 200 839 226 825.500 255 826.500 271.500 832V895M255 826.500L263 836 267.500 845V895M186.500 895V868L200 845 225 832.500 242 837 249.500 852V895"/>
                        <circle cx="258" cy="861" r="3"/><circle cx="236" cy="882" r="7"/><circle cx="236" cy="882" r="5"/>
                    </g>
                    <g transform="translate(-40 -159)">
                        <!-- 坐标系 -->
                        <path class="white" d="M58.500 825V876.500H109M54.500 872.500h9v8h-9z"/>
                        <text class="ucs" x="61" y="821">Y</text><text class="ucs" x="114" y="875">X</text>
                        <!-- 夹点 -->
                        <path class="hot" d="M355 451h11v11h-11zM672 451h11v11h-11z"/>
                        <!-- 箭头标记 -->
                        <path class="mark" d="M769 267L807 383 811 382 808 400 796 388 799 386zM759 614L789 509 786 507 798 494 801 512 797 511z"/>
                        <!-- 光标 -->
                        <path class="white" d="M900.500 378V475M852 426.500H949M897.500 423.500h6v6h-6z"/>
                    </g>
                </svg>
                <span class="view-label">[−][俯视][二维线框]</span>

                <div class="bar mesh">
                    <i class="grip"></i>
                    <button class="t"><svg class="ic"><use href="#meshbox"/></svg></button>
                    <button class="t"><svg class="ic"><use href="#ball"/></svg></button>
                    <button class="t"><svg class="ic"><use href="#ballplus"/></svg></button>
                    <button class="t"><svg class="ic"><use href="#ballminus"/></svg></button>
                    <button class="t"><svg class="ic"><use href="#ballcut"/></svg></button>
                    <i class="sep"></i>
                    <button class="t"><svg class="ic"><use href="#meshcrease"/></svg></button>
                    <button class="t"><svg class="ic"><use href="#meshnone"/></svg></button>
                    <button class="mesh-close" aria-label="关闭"><svg width="6" height="6"><path d="M1 1l4 4M5 1L1 5" stroke="#fff" stroke-width="2"/></svg></button>
                </div>

                <div class="cube">
                    <div class="compass">
                        <span class="n">北</span><span class="w">西</span><button class="top">上</button><span class="e">东</span><span class="s">南</span>
                    </div>
                    <button class="wcs">WCS <svg width="10" height="7"><path d="M1 1h8L5 6z"/></svg></button>
                </div>

                <div class="tip" role="tooltip">
                    <h2>块参照</h2>
                    <dl>
                        <dt>颜色</dt><dd><i class="swatch cy"></i>ByLayer</dd>
                        <dt>图层</dt><dd>WINDOW</dd>
                        <dt>线型</dt><dd>ByLayer</dd>
                    </dl>
                </div>
            </div>
            <div class="vscroll">
                <button aria-label="向上"><svg width="12" height="8"><path d="M1 7l5-5 5 5"/></svg></button>
                <i class="thumb-v"></i>
                <button class="last" aria-label="向下"><svg width="12" height="8"><path d="M1 1l5 5 5-5"/></svg></button>
            </div>
            <div class="layouts">
                <button class="nav"><svg width="10" height="12"><path d="M1 0v12" stroke="#555" stroke-width="2"/><path d="M9 1v10L3 6z"/></svg></button>
                <button class="nav"><svg width="10" height="12"><path d="M8 1v10L2 6z"/></svg></button>
                <button class="nav"><svg width="10" height="12"><path d="M2 1v10l6-5z"/></svg></button>
                <button class="nav"><svg width="10" height="12"><path d="M9 0v12" stroke="#555" stroke-width="2"/><path d="M1 1v10l6-5z"/></svg></button>
                <button class="layout current">模型</button>
                <button class="layout">布局1</button>
                <svg class="slant" width="10" height="19"><path d="M9 0L1 19"/></svg>
                <div class="hscroll">
                    <i class="split"></i>
                    <button aria-label="向左"><svg width="8" height="10"><path d="M6 1L2 5l4 4"/></svg></button>
                    <i class="thumb-h"></i>
                    <button class="last" aria-label="向右"><svg width="8" height="10"><path d="M2 1l4 4-4 4"/></svg></button>
                </div>
            </div>
        </section>

        <div class="dock right">
            <div class="tools">
                <i class="grip-h"></i>
                <button class="v"><svg class="ic"><use href="#erase"/></svg></button>
                <button class="v"><svg class="ic"><use href="#copyobj"/></svg></button>
                <button class="v"><svg class="ic"><use href="#mirror"/></svg></button>
                <button class="v"><svg class="ic"><use href="#offset"/></svg></button>
                <button class="v"><svg class="ic"><use href="#array"/></svg></button>
                <button class="v"><svg class="ic"><use href="#move"/></svg></button>
                <button class="v"><svg class="ic"><use href="#rotate"/></svg></button>
                <button class="v"><svg class="ic"><use href="#scale"/></svg></button>
                <button class="v"><svg class="ic"><use href="#stretch"/></svg></button>
                <button class="v"><svg class="ic"><use href="#trim"/></svg></button>
                <button class="v"><svg class="ic"><use href="#extend"/></svg></button>
                <button class="v"><svg class="ic"><use href="#breakpt"/></svg></button>
                <button class="v"><svg class="ic"><use href="#break"/></svg></button>
                <button class="v"><svg class="ic"><use href="#join"/></svg></button>
                <button class="v"><svg class="ic"><use href="#chamfer"/></svg></button>
                <button class="v"><svg class="ic"><use href="#fillet"/></svg></button>
                <button class="v"><svg class="ic"><use href="#blend"/></svg></button>
                <button class="v"><svg class="ic"><use href="#explode"/></svg></button>
            </div>
            <div class="tools">
                <i class="grip-h"></i>
                <button class="v"><svg class="ic"><use href="#front"/></svg></button>
                <button class="v"><svg class="ic"><use href="#back"/></svg></button>
                <button class="v"><svg class="ic"><use href="#above"/></svg></button>
                <button class="v"><svg class="ic"><use href="#under"/></svg></button>
                <i class="sep-h"></i>
                <button class="v"><svg class="ic"><use href="#textfront"/></svg></button>
                <button class="v"><svg class="ic"><use href="#hatchback"/></svg></button>
            </div>
        </div>
    </main>

    <!-- 命令行 -->
    <section class="command">
        <div class="cmd-side">
            <i class="cmd-grip"></i>
            <button aria-label="关闭"><svg width="12" height="10"><path d="M2 1l8 8M10 1L2 9" stroke="#fff" stroke-width="2"/></svg></button>
            <button aria-label="自定义"><svg width="12" height="8"><path d="M1 7h3M7 1q4 0 4 6" stroke="#ddd" stroke-width="2"/></svg></button>
        </div>
        <div class="cmd-main">
            <div class="cmd-history">命令:</div>
            <div class="cmd-line">
                <button class="prompt"><svg width="14" height="12"><path d="M2 2l4 4-4 4M8 10h5"/></svg></button>
                <svg class="tiny-arrow"><use href="#down"/></svg>
                <input type="text" placeholder="键入命令" aria-label="命令">
            </div>
        </div>
    </section>

    <footer class="status">
        <span class="coords">2029555, -732285, 0</span>
        <button class="s"><svg class="ic"><use href="#s-infer"/></svg></button>
        <button class="s"><svg class="ic"><use href="#s-snap"/></svg></button>
        <button class="s"><svg class="ic"><use href="#s-grid"/></svg></button>
        <button class="s on"><svg class="ic"><use href="#s-ortho"/></svg></button>
        <button class="s"><svg class="ic"><use href="#s-polar"/></svg></button>
        <button class="s on"><svg class="ic"><use href="#s-osnap"/></svg></button>
        <button class="s"><svg class="ic"><use href="#s-osnap3"/></svg></button>
        <button class="s on"><svg class="ic"><use href="#s-track"/></svg></button>
        <button class="s on"><svg class="ic"><use href="#s-ducs"/></svg></button>
        <button class="s on"><svg class="ic"><use href="#s-dyn"/></svg></button>
        <button class="s"><svg class="ic"><use href="#s-lwt"/></svg></button>
        <button class="s on"><svg class="ic"><use href="#s-tpy"/></svg></button>
        <button class="s"><svg class="ic"><use href="#s-qp"/></svg></button>
        <button class="s"><svg class="ic"><use href="#s-sc"/></svg></button>
        <button class="s"><svg class="ic"><use href="#s-am"/></svg></button>
        <span class="fill"></span>
        <button class="s text">模型</button>
        <button class="s"><svg class="ic"><use href="#s-layout"/></svg></button>
        <button class="s"><svg class="ic"><use href="#s-quick"/></svg></button>
        <span class="gap"></span>
        <button class="s zoom"><svg class="ic"><use href="#s-anno"/></svg>1:1<svg class="tiny-arrow"><use href="#down"/></svg></button>
        <button class="s"><svg class="ic"><use href="#s-annoauto"/></svg></button>
        <button class="s dim"><svg class="ic"><use href="#s-anno"/></svg></button>
        <span class="gap small"></span>
        <button class="s"><svg class="ic"><use href="#gear"/></svg></button>
        <button class="s"><svg class="ic"><use href="#lock-open"/></svg></button>
        <button class="s"><svg class="ic"><use href="#s-iso"/></svg></button>
        <span class="tray"><svg class="ic"><use href="#s-perf"/></svg><svg class="ic"><use href="#bulb"/></svg></span>
        <button class="s narrow"><svg class="tiny-arrow"><use href="#down"/></svg></button>
        <button class="s"><svg class="ic"><use href="#s-clean"/></svg></button>
        <svg class="resize" width="20" height="20"><path d="M16 8v2M12 12v2M16 12v2M8 16v2M12 16v2M16 16v2"/></svg>
    </footer>
</div>
</body>
</html>
```

FILE: styles.css
```css
* {
    box-sizing: border-box;
}

body {
    margin: 0;
    padding: 1px 9px 8px;
    height: 100vh;
    overflow: hidden;
    background: #0b0c0d;
    font: 15px/20px "Noto Sans", "Noto Sans CJK SC", sans-serif;
    color: #111;
}

button, input, select {
    margin: 0;
    padding: 0;
    border: 0;
    border-radius: 0;
    background: none;
    font: inherit;
    color: inherit;
}

select {
    appearance: none;
    flex: 1;
    min-width: 0;
    outline: none;
}

svg {
    display: block;
    flex: none;
    fill: none;
    stroke: #38424e;
}

a {
    color: inherit;
    text-decoration: none;
}

i {
    flex: none;
}

.sprite {
    display: none;
}

.glyph {
    font: 600 12px "Open Sans", sans-serif;
    fill: #333;
    stroke: none;
}

.glyph.big {
    font-size: 17px;
}

.glyph.tiny {
    font-size: 6px;
}

/* 桌面 */
.desktop {
    position: absolute;
    inset: 0;
    overflow: hidden;
    background: linear-gradient(#101417 0, #14110e 40%, #2d1d11 66%, #050505 76%, #030303 100%);
}

.desk-text {
    position: absolute;
    left: calc(100% - 8px);
    color: #ddd;
    white-space: nowrap;
}

.desk-text.left {
    left: -6px;
    top: 971px;
}

.d1 { top: 88px; }
.d2 { top: 347px; }
.d3 { top: 475px; }
.d4 { top: 585px; }
.d5 { top: 714px; }
.d6 { top: 843px; }

.desk-icon {
    position: absolute;
    right: 0;
    width: 2px;
    height: 16px;
    background: #ddd;
}

.k1 { top: 49px; }
.k2 { top: 178px; }
.k3 { top: 306px; }
.k4 { top: 435px; }
.k5 { top: 564px; }
.k6 {
    top: 779px;
    height: 43px;
    background: #b3202c;
}

.app {
    position: relative;
    display: flex;
    flex-direction: column;
    height: 100%;
    background: #686868;
}

/* 标题栏 */
.titlebar {
    display: flex;
    align-items: flex-end;
    height: 38px;
    padding-left: 46px;
    background: #fff;
}

.logo {
    position: absolute;
    left: 0;
    top: 8px;
    z-index: 2;
    display: flex;
    align-items: center;
    justify-content: center;
    width: 41px;
    height: 41px;
    border: 1px solid #111;
    background: linear-gradient(#d2d2d2, #777);
}

.logo svg {
    stroke: none;
}

.tiny-arrow {
    width: 8px;
    height: 8px;
    color: #333;
}

.arrow {
    width: 12px;
    height: 12px;
    color: #333;
}

.quick, .info {
    display: flex;
    align-items: center;
    height: 30px;
    background: linear-gradient(#b2b2b2, #858585);
}

.q {
    display: flex;
    align-items: center;
    justify-content: center;
    width: 30px;
    height: 28px;
}

.q-arrow {
    display: flex;
    justify-content: center;
    width: 14px;
}

.qi {
    width: 20px;
    height: 20px;
}

.workspace {
    display: flex;
    align-items: center;
    width: 225px;
    height: 28px;
    margin-left: 3px;
    padding: 0 2px 0 4px;
    gap: 2px;
    border: 1px solid #444;
    background: linear-gradient(#e6e6e6, #c8c8c8);
}

.q-more {
    display: flex;
    align-items: center;
    justify-content: center;
    width: 18px;
    height: 30px;
    background: #858585;
}

.doc-title {
    flex: 1;
    margin: 0;
    padding-left: 26px;
    align-self: center;
    font-size: 15px;
    font-weight: 400;
    text-align: center;
    white-space: nowrap;
}

.info {
    padding-right: 3px;
    border: 1px solid #666;
}

.info-toggle {
    display: flex;
    align-items: center;
    justify-content: center;
    width: 17px;
    height: 28px;
}

.info-toggle svg {
    stroke: none;
}

.search {
    width: 223px;
    height: 26px;
    padding-left: 4px;
    background: #f4f4f4;
    font-size: 14px;
}

.search::placeholder, .cmd-line input::placeholder {
    color: #777;
    font-style: italic;
    opacity: 1;
}

.login {
    width: 104px;
    padding-left: 2px;
    color: #fff;
    text-align: left;
}

.info-sep {
    width: 1px;
    height: 20px;
    margin: 0 7px;
    background: #999;
}

.help-ball {
    width: 20px;
    height: 20px;
    border: 1px solid #333;
    border-radius: 50%;
    background: #f4f6fa;
    color: #2450b5;
    font-weight: 700;
    line-height: 18px;
}

.win-buttons {
    display: flex;
    align-self: center;
    width: 205px;
    padding-left: 30px;
}

.win-buttons button {
    display: flex;
    justify-content: center;
    width: 58px;
}

.win-buttons svg {
    stroke: #777;
}

/* 菜单 */
.menubar {
    display: flex;
    align-items: center;
    gap: 28px;
    height: 26px;
    padding: 0 4px 2px 56px;
    border-top: 1px solid #333;
    background: linear-gradient(#a5a5a5, #5c5c5c);
    color: #fff;
    white-space: nowrap;
}

.mdi {
    display: flex;
    gap: 5px;
    margin-left: auto;
}

.mdi svg {
    stroke: #222;
}

/* 文档标签 */
.doc-tabs {
    display: flex;
    align-items: flex-end;
    height: 33px;
    border-bottom: 1px solid #999;
    padding-left: 24px;
    background: linear-gradient(#a4a4a4, #8f8f8f);
}

.doc-tab {
    position: relative;
    display: flex;
    align-items: center;
    width: 256px;
    height: 28px;
    margin-right: -24px;
    padding-left: 16px;
    color: #555;
    white-space: nowrap;
}

.doc-tab.active {
    z-index: 1;
    width: 228px;
    color: #111;
}

.tab-shape {
    position: absolute;
    inset: 0;
    width: 100%;
    height: 100%;
    stroke: #bdbdbd;
}

.doc-tab a {
    position: relative;
}

.tab-close {
    position: relative;
    margin-left: 12px;
}

.tab-close svg {
    stroke: #888;
}

.tab-new {
    z-index: 1;
    margin: 0 0 5px 22px;
}

/* 工具栏 */
.bars {
    display: flex;
    flex-direction: column;
    gap: 3px;
    padding: 4px 0 4px 1px;
}

.bar-row {
    display: flex;
    gap: 2px;
}

.bar {
    display: flex;
    align-items: center;
    height: 24px;
    border: 1px solid #333;
    background: #e9e9e9;
}

.grip {
    width: 7px;
    align-self: stretch;
    border: solid #555;
    border-width: 2px 2px 2px 1px;
    background: repeating-linear-gradient(#111 0 1px, #777 1px 3px);
}

.t {
    display: flex;
    align-items: center;
    justify-content: center;
    width: 23px;
    height: 22px;
}

.t-arrow {
    display: flex;
    justify-content: center;
    width: 13px;
}

.off .tiny-arrow {
    color: #aaa;
}

.ic {
    width: 16px;
    height: 16px;
}

.sep {
    width: 1px;
    height: 18px;
    margin: 0 3px 0 2px;
    background: #888;
}

.combo {
    display: flex;
    align-items: center;
    height: 22px;
    padding: 0 5px;
    border: 1px solid #bbb;
    background: #e1e1e1;
}

.chev {
    width: 12px;
    height: 12px;
}

.w-style {
    width: 120px;
}

.w-space {
    width: 174px;
    padding-left: 8px;
}

.w-layer {
    width: 298px;
}

.w-layer select {
    padding-left: 5px;
}

.mono {
    font: 13px/20px "Liberation Mono", "Noto Sans CJK SC", monospace;
}

.w-color {
    width: 150px;
}

.w-color select {
    font-size: 14px;
    padding-left: 3px;
}

.w-ltype {
    width: 160px;
}

.w-weight {
    width: 125px;
}

.w-plot {
    width: 118px;
    padding-left: 8px;
}

.combo.off {
    background: #cdcdcd;
    color: #777;
}

.combo.off select {
    opacity: 1;
    color: #777;
}

.combo.off svg {
    stroke: #aaa;
}

.swatch {
    display: inline-block;
    width: 11px;
    height: 11px;
    border: 1px solid #000;
}

.swatch.white {
    background: #fff;
}

.swatch.red-fill {
    background: #f00;
}

.swatch.cy {
    width: 12px;
    height: 12px;
    margin-right: 4px;
    background: #0ff;
}

.ltype {
    width: 60px;
    height: 1px;
    margin-right: 5px;
    background: #000;
}

.weight {
    width: 35px;
    height: 7px;
    margin-right: 5px;
    background: #000;
}

/* 工作区 */
.work {
    display: flex;
    flex: 1;
    min-height: 0;
}

.dock {
    display: flex;
    flex-direction: column;
    gap: 2px;
    width: 30px;
    padding-top: 1px;
}

.dock.right {
    width: 33px;
    padding-left: 5px;
}

.tools {
    display: flex;
    flex-direction: column;
    width: 24px;
    outline: 1px solid #3a3a3a;
    outline-offset: -1px;
    background: #ebebeb;
}

.grip-h {
    height: 8px;
    border: 2px solid #555;
    border-width: 2px 4px;
    background: repeating-linear-gradient(90deg, #111 0 1px, #777 1px 3px);
}

.v {
    display: flex;
    align-items: center;
    justify-content: center;
    height: 22px;
}

.sep-h {
    height: 1px;
    margin: 2px 3px 3px;
    background: #888;
}

.frame {
    display: grid;
    grid-template: 1fr 22px / 1fr 22px;
    flex: 1;
    min-width: 0;
    border: solid #a0a0a0;
    border-width: 2px 0 0 1px;
}

.canvas {
    position: relative;
    overflow: hidden;
    background: #212830;
}

.plan {
    position: absolute;
    inset: 0;
}

.cyan {
    stroke: #20e2e2;
}

.yellow {
    stroke: #ffff1e;
}

.grey {
    stroke: #bcc0c6;
}

.red {
    stroke: #d0141c;
}

.dash {
    stroke: #e0203c;
    stroke-dasharray: 4 2;
}

.magenta {
    stroke: #f01cf0;
}

.white {
    stroke: #fff;
}

.ucs {
    font: 18px "Open Sans", sans-serif;
    font-weight: 300;
    fill: #fff;
    stroke: none;
}

.hot {
    fill: #007fff;
    stroke: none;
}

.mark {
    fill: #ff3737;
    stroke: none;
}

.view-label {
    position: absolute;
    left: 4px;
    top: 3px;
    color: #eee;
    font-size: 12px;
}

.mesh {
    position: absolute;
    left: 159px;
    top: 65px;
    height: 22px;
    border: 0;
}

.mesh-close {
    align-self: stretch;
    width: 8px;
    padding: 3px 1px;
    background: #555;
}

.mesh-close svg {
    margin-bottom: 8px;
}

.cube {
    position: absolute;
    top: 12px;
    right: 16px;
    display: flex;
    flex-direction: column;
    align-items: center;
    gap: 17px;
    width: 134px;
}

.compass {
    display: grid;
    grid-template: 26px 1fr 26px / 22px 1fr 22px;
    align-items: center;
    justify-items: center;
    width: 134px;
    height: 140px;
    background: radial-gradient(circle at center, transparent 47px, #434a52 48px 60px, transparent 61px);
    color: #b4b6b8;
    font: 20px/26px "Noto Sans CJK SC", sans-serif;
}

.n, .compass .s {
    grid-column: 2;
}

.compass .w, .compass .e, .top {
    grid-row: 2;
}

.compass .s {
    grid-row: 3;
}

.top {
    width: 52px;
    height: 52px;
    border: 10px solid #b0b1b2;
    background: #a0aab3;
    color: #566068;
    font-size: 26px;
    line-height: 30px;
}

.wcs {
    display: flex;
    align-items: center;
    justify-content: center;
    gap: 5px;
    width: 48px;
    height: 17px;
    border: 1px solid #8c8e9a;
    border-radius: 3px;
    background: #9c9da8;
    color: #50535c;
    font: 11px/15px "Liberation Sans", sans-serif;
}

.wcs svg {
    stroke: #b0b0ba;
}

.tip {
    position: absolute;
    left: 876px;
    top: 284px;
    width: 150px;
    height: 132px;
    padding: 12px;
    border: 1px solid #777;
    background: #f0f1f7;
    color: #555;
}

.tip h2 {
    margin: 0 0 7px;
    font-size: 15px;
    font-weight: 500;
    line-height: 20px;
}

.tip dl {
    display: grid;
    grid-template-columns: 30px 1fr;
    column-gap: 14px;
    margin: 0 0 0 2px;
    line-height: 25px;
}

.tip dd {
    display: flex;
    align-items: center;
    margin: 0;
}

.vscroll, .hscroll {
    display: flex;
    align-items: center;
    background: #f0f0f0;
}

.vscroll {
    flex-direction: column;
    padding: 7px 0 7px;
    border-right: 1px solid #fff;
}

.thumb-v {
    width: 19px;
    height: 21px;
    margin-top: 40px;
    background: #cdcdcd;
}

.vscroll svg, .hscroll svg {
    stroke: #505050;
    stroke-width: 2;
}

.last {
    margin-top: auto;
}

/* 布局标签 */
.layouts {
    grid-column: 1 / 3;
    display: flex;
    border-top: 1px solid #888;
    border-bottom: 3px solid #fff;
    background: #f0f0f0;
    line-height: 18px;
}

.nav {
    display: flex;
    align-items: center;
    justify-content: center;
    width: 18px;
    border: 1px solid #999;
    border-left-color: #fff;
    background: #f4f4f4;
}

.nav svg path {
    fill: #555;
    stroke: none;
}

.nav svg path[stroke] {
    fill: none;
    stroke: #555;
}

.layout {
    width: 52px;
}

.layout.current {
    width: 57px;
    background: #212830;
    color: #fff;
    clip-path: polygon(0 0, 100% 0, 90% 100%, 10% 100%);
}

.hscroll {
    flex: 1;
    padding-right: 28px;
}

.split {
    width: 6px;
    height: 17px;
    margin: 0 7px 0 auto;
    background: #cdcdcd;
}

.thumb-h {
    width: 21px;
    height: 17px;
    margin: 0 229px 0 266px;
    background: #cdcdcd;
}

.hscroll .last {
    margin: 0;
}

/* 命令行 */
.command {
    display: flex;
    height: 56px;
    margin: 4px 1px 0 0;
}

.cmd-side {
    display: flex;
    flex-direction: column;
    align-items: center;
    gap: 10px;
    width: 29px;
    padding-top: 5px;
    overflow: hidden;
    background: linear-gradient(90deg, #777, #484848);
}

.cmd-grip {
    width: 21px;
    height: 7px;
    background: radial-gradient(circle, #aaa 1px, transparent 1px) 0 0 / 4px 4px;
}

.cmd-main {
    flex: 1;
}

.cmd-history {
    height: 28px;
    padding: 4px;
    border-bottom: 1px solid #777;
    background: #c8c8c8;
}

.cmd-line {
    display: flex;
    align-items: center;
    height: 28px;
    padding: 0 0 2px 6px;
    background: #fff;
}

.prompt {
    width: 19px;
    height: 18px;
    padding: 2px;
    margin-right: 3px;
    border: 1px solid #bbb;
    background: #dfe2e6;
}

.prompt svg {
    stroke: #5c646e;
    stroke-width: 2;
}

.cmd-line .tiny-arrow {
    color: #777;
}

.cmd-line input {
    flex: 1;
    padding-left: 10px;
    outline: none;
}

.cmd-line input::placeholder {
    color: #999;
}

/* 状态栏 */
.status {
    display: flex;
    height: 23px;
    border-top: 1px solid #111;
    background: linear-gradient(#999, #777);
}

.coords {
    width: 214px;
    padding-left: 12px;
    font: 13px/22px "Liberation Mono", monospace;
    border-right: 1px solid #444;
}

.status .s {
    display: flex;
    align-items: center;
    justify-content: center;
    width: 22px;
    border-right: 1px solid #555;
    background: linear-gradient(#c2c2c2, #a8a8a8);
}

.status .on {
    background: linear-gradient(#e4f4f8, #8fc8d8);
}

.fill {
    flex: 1;
    border-right: 1px solid #444;
}

.status .text {
    width: 36px;
    font-size: 14px;
}

.gap {
    width: 22px;
}

.gap.small {
    width: 6px;
}

.status .zoom {
    width: 60px;
    gap: 4px;
    font: 13px/22px "Liberation Mono", monospace;
}

.dim svg {
    opacity: 0.5;
}

.tray {
    display: flex;
    align-items: center;
    justify-content: space-around;
    width: 48px;
    margin: 1px 4px;
    border: 1px solid #555;
    background: #aaa;
}

.status .narrow {
    width: 11px;
}

.resize {
    stroke: #ddd;
    stroke-width: 2;
}
```
